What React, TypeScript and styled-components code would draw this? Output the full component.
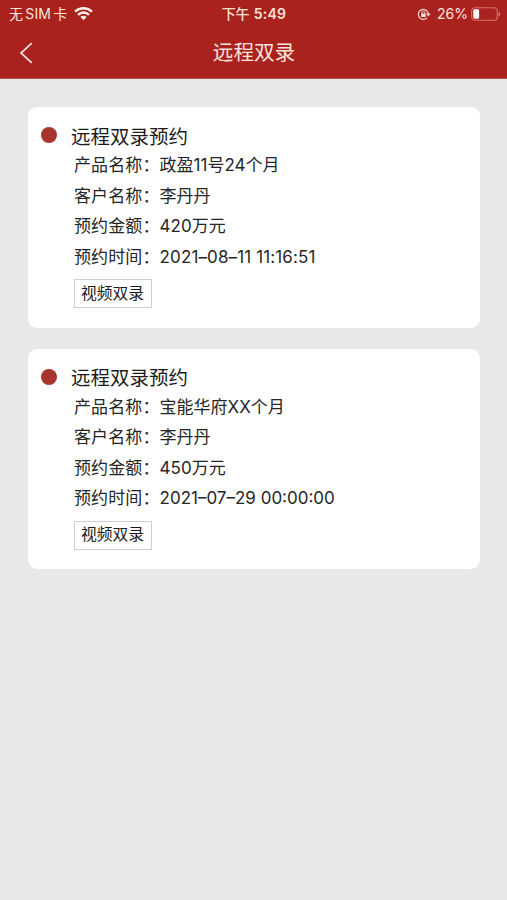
import React from "react";
import styled, { createGlobalStyle } from "styled-components";

const GlobalStyle = createGlobalStyle`
  * { box-sizing: border-box; }
  body {
    margin: 0;
    background: #e8e8e8;
    font-family: Inter, "Noto Sans CJK SC", sans-serif;
    color: #262626;
  }
`;

const Screen = styled.div`
  min-height: 900px;
  background: #e8e8e8;
`;

const Header = styled.header`
  height: 79px;
  background: #a9221d;
  border-bottom: 1px solid #b5514d;
  color: #fbe3dc;
`;

const StatusBar = styled.div`
  display: grid;
  grid-template-columns: 1fr auto 1fr;
  align-items: center;
  height: 27px;
  padding: 0 6px 0 9px;
  font-size: 14px;
  line-height: 27px;
  white-space: nowrap;
`;

const StatusGroup = styled.div<{ $end?: boolean }>`
  display: flex;
  align-items: center;
  justify-content: ${(p) => (p.$end ? "flex-end" : "flex-start")};
`;

const Carrier = styled.span`
  display: flex;
  gap: 2px;
  margin-right: 7px;
  letter-spacing: 0.2px;
`;

const Clock = styled.div`
  display: flex;
  gap: 4px;
  padding-right: 2px;
  font-weight: 500;
  font-size: 14px;
`;

const Digits = styled.span`
  font-weight: 600;
  font-size: 14px;
  letter-spacing: 0.3px;
`;

const Percent = styled.span`
  margin: 0 3px 0 6px;
  font-size: 14px;
`;

const NavBar = styled.nav`
  display: grid;
  grid-template-columns: 53px 1fr 53px;
  align-items: center;
  height: 51px;
`;

const BackButton = styled.button`
  display: flex;
  align-items: center;
  height: 44px;
  padding: 0 0 0 19px;
  border: 0;
  background: none;
  color: inherit;
`;

const PageTitle = styled.h1`
  margin: 0;
  padding-left: 1px;
  text-align: center;
  font-size: 20.6px;
  font-weight: 400;
  line-height: 51px;
`;

const List = styled.main`
  display: flex;
  flex-direction: column;
  gap: 21px;
  padding: 28px 27.5px 0 28px;
`;

const Card = styled.article`
  height: 220.5px;
  padding: 16px 13px 0;
  border-radius: 9px;
  background: #fff;
`;

const CardHeader = styled.div`
  display: flex;
  align-items: center;
  gap: 14px;
  height: 27px;
`;

const Dot = styled.span`
  width: 16px;
  height: 16px;
  margin-bottom: 3px;
  border-radius: 50%;
  background: #a8352d;
`;

const CardTitle = styled.h2`
  margin: 0;
  color: #1c1c1c;
  font-size: 19.5px;
  font-weight: 400;
  line-height: 28px;
`;

const Details = styled.dl`
  margin: 0 0 0 33px;
`;

const DetailRow = styled.div`
  display: flex;
  height: 30.5px;
  font-size: 17px;
  line-height: 31px;
  white-space: nowrap;
`;

const Label = styled.dt`
  width: 85.6px;
  letter-spacing: 0.1px;
`;

const Value = styled.dd<{ $wide?: boolean }>`
  margin: 0;
  letter-spacing: ${(p) => (p.$wide ? "0.12px" : "0")};
`;

const ActionButton = styled.button`
  display: flex;
  align-items: center;
  justify-content: center;
  width: 78px;
  height: 29px;
  margin: 7px 0 0 33px;
  padding: 0 1px 1px 0;
  border: 1px solid #cfcfcf;
  background: #fff;
  color: #1c1c1c;
  font: 400 15.8px/27px Inter, "Noto Sans CJK SC", sans-serif;
  white-space: nowrap;
`;

const WifiIcon = () => (
  <svg width="19" height="14" viewBox="0 0 19 14" fill="none" stroke="#fff0e8" strokeWidth="2.5">
    <path d="M1 4.6a12.2 12.2 0 0 1 17 0" />
    <path d="M4 7.8a7.9 7.9 0 0 1 11 0" />
    <path d="M9.5 13.2 6.4 10.1a4.4 4.4 0 0 1 6.2 0Z" fill="#fff0e8" stroke="none" />
  </svg>
);

const RotationLockIcon = () => (
  <svg width="14" height="14" viewBox="0 0 14 14" fill="none" stroke="#fbd7d0" strokeWidth="1.2">
    <path d="M10 10.8A5 5 0 1 1 11.3 7" />
    <path d="M9 6.6h4.6l-2.3 2.8Z" fill="#fbd7d0" stroke="none" />
    <rect x="4" y="6.4" width="4.8" height="3.6" rx=".5" fill="#fbd7d0" stroke="none" />
    <path d="M5 6.8V5.5a1.4 1.4 0 0 1 2.8 0v1.3" strokeWidth="1" />
  </svg>
);

const BatteryIcon = () => (
  <svg width="30" height="14" viewBox="0 0 30 14" fill="none">
    <rect x=".7" y=".7" width="25.6" height="12.6" rx="3.4" stroke="#d2736b" strokeWidth="1.1" />
    <rect x="2.3" y="2.3" width="5.8" height="9.4" rx="1.4" fill="#fff" />
    <path d="M27.5 4.7c2.4.8 2.4 3.8 0 4.6Z" fill="#d2736b" />
  </svg>
);

const BackIcon = () => (
  <svg width="14" height="22" viewBox="0 0 14 22" fill="none" stroke="#fbe3dc" strokeWidth="1.7">
    <path d="M12.8 1.2 2 11l10.8 9.8" />
  </svg>
);

interface Booking {
  product: string;
  customer: string;
  amount: string;
  time: string;
}

const bookings: Booking[] = [
  { product: "政盈11号24个月", customer: "李丹丹", amount: "420万元", time: "2021–08–11 11:16:51" },
  { product: "宝能华府XX个月", customer: "李丹丹", amount: "450万元", time: "2021–07–29 00:00:00" },
];

const Detail = ({ label, value, wide }: { label: string; value: string; wide?: boolean }) => (
  <DetailRow>
    <Label>{label}</Label>
    <Value $wide={wide}>{value}</Value>
  </DetailRow>
);

const BookingCard = ({ booking }: { booking: Booking }) => {
  const narrowDigits = (booking.time.match(/1/g) ?? []).length > 4;
  return (
    <Card>
      <CardHeader>
        <Dot />
        <CardTitle>远程双录预约</CardTitle>
      </CardHeader>
      <Details>
        <Detail label="产品名称：" value={booking.product} />
        <Detail label="客户名称：" value={booking.customer} />
        <Detail label="预约金额：" value={booking.amount} />
        <Detail label="预约时间：" value={booking.time} wide={narrowDigits} />
      </Details>
      <ActionButton>视频双录</ActionButton>
    </Card>
  );
};

export default function App() {
  return (
    <Screen lang="zh-CN">
      <GlobalStyle />
      <Header>
        <StatusBar>
          <StatusGroup>
            <Carrier>
              <span>无</span>
              <span>SIM</span>
              <span>卡</span>
            </Carrier>
            <WifiIcon />
          </StatusGroup>
          <Clock>
            <span>下午</span>
            <Digits>5:49</Digits>
          </Clock>
          <StatusGroup $end>
            <RotationLockIcon />
            <Percent>26%</Percent>
            <BatteryIcon />
          </StatusGroup>
        </StatusBar>
        <NavBar>
          <BackButton aria-label="返回">
            <BackIcon />
          </BackButton>
          <PageTitle>远程双录</PageTitle>
        </NavBar>
      </Header>
      <List>
        {bookings.map((booking) => (
          <BookingCard key={booking.time} booking={booking} />
        ))}
      </List>
    </Screen>
  );
}
